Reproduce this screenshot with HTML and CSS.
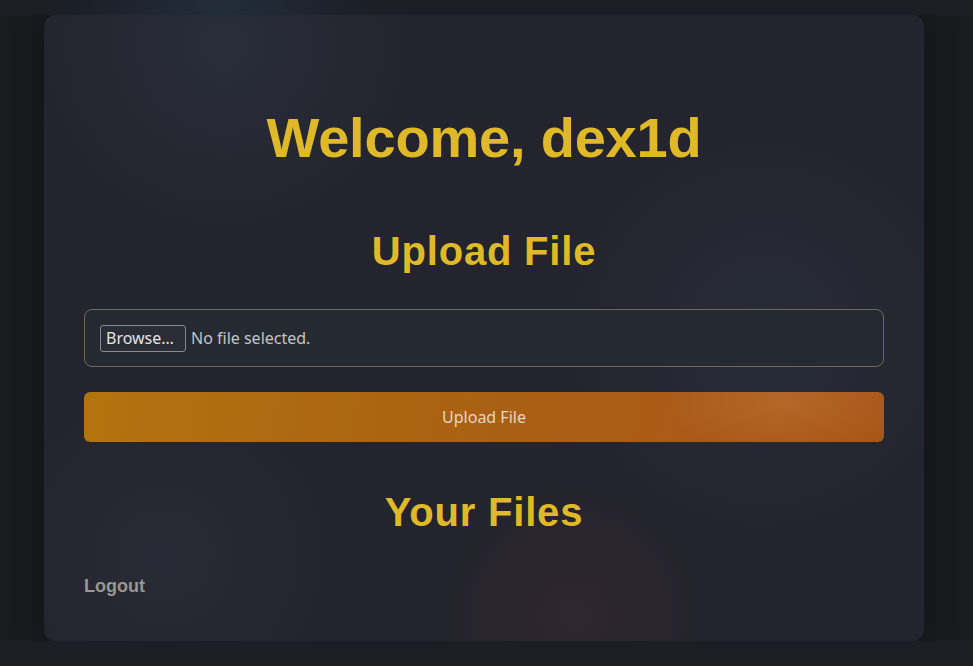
FILE: index.html
```html
<!DOCTYPE html>
<html lang="en">
<head>
<meta charset="utf-8">
<title>Dashboard</title>
<link rel="stylesheet" href="styles.css">
</head>
<body>
  <main class="card">
    <h1 class="title">Welcome, dex1d</h1>
    <h2 class="section-title">Upload File</h2>
    <form class="upload-form">
      <div class="file-field">
        <span class="browse-btn">Browse…</span>
        <span class="file-status">No file selected.</span>
      </div>
      <button type="button" class="upload-btn">Upload File</button>
    </form>
    <h2 class="section-title files-title">Your Files</h2>
    <a class="logout" href="#">Logout</a>
  </main>
</body>
</html>
```

FILE: styles.css
```css
html {
  background:
    radial-gradient(circle at 220px 10px, rgba(40, 60, 80, 0.5), transparent 160px),
    #1b1e25;
  min-height: 100%;
}

body {
  margin: 15px 0 0;
  background: #1a1b1f;
  font-family: "Noto Sans", "Open Sans", sans-serif;
}

.card {
  margin-left: 44px;
  width: 800px;
  height: 536px;
  padding: 45px 40px 45px;
  border-radius: 12px;
  background:
    radial-gradient(circle at 180px 30px, rgba(45, 52, 64, 0.6), transparent 200px),
    radial-gradient(circle at 720px 320px, rgba(42, 48, 60, 0.7), transparent 220px),
    radial-gradient(circle at 530px 600px, rgba(58, 40, 50, 0.55), transparent 140px),
    radial-gradient(circle at 120px 540px, rgba(44, 46, 58, 0.6), transparent 180px),
    #23242d;
  box-shadow: 0 0 30px rgba(0, 0, 0, 0.35);
  display: flex;
  flex-direction: column;
}

.title {
  margin: 46px 0 0;
  text-align: center;
  font-family: "Liberation Sans", Arial, sans-serif;
  font-size: 56px;
  font-weight: 700;
  letter-spacing: -0.2px;
  color: #dfb927;
  line-height: 64px;
}

.section-title {
  margin: 58px 0 0;
  text-align: center;
  font-family: "Liberation Sans", Arial, sans-serif;
  font-size: 40px;
  font-weight: 700;
  letter-spacing: 0.8px;
  color: #dfb927;
  line-height: 46px;
}

.upload-form {
  margin-top: 35px;
  display: flex;
  flex-direction: column;
  gap: 25px;
}

.file-field {
  height: 56px;
  border: 1px solid #716955;
  border-radius: 8px;
  background: #252932;
  display: flex;
  align-items: center;
  padding: 0 15px;
  gap: 5px;
  font-size: 16px;
  color: #c4c4c4;
}

.browse-btn {
  border: 1px solid #8a8a90;
  border-radius: 3px;
  padding: 0 5px;
  width: 74px;
  height: 25px;
  line-height: 24px;
  color: #e4e4e4;
  background: #2a2d36;
}

.upload-btn {
  height: 50px;
  border: none;
  border-radius: 6px;
  background:
    radial-gradient(ellipse 120px 50px at 700px 10px, rgba(200, 130, 70, 0.35), transparent),
    linear-gradient(100deg, #b3740f 0%, #aa6212 45%, #aa5b18 75%, #a85719 100%);
  color: #e6d6c6;
  font-family: "Noto Sans", "Open Sans", sans-serif;
  font-size: 16px;
}

.files-title {
  margin-top: 47px;
}

.logout {
  margin-top: 41px;
  align-self: flex-start;
  font-family: "Liberation Sans", Arial, sans-serif;
  font-size: 18px;
  font-weight: 700;
  color: #9a9690;
  text-decoration: none;
}
```
